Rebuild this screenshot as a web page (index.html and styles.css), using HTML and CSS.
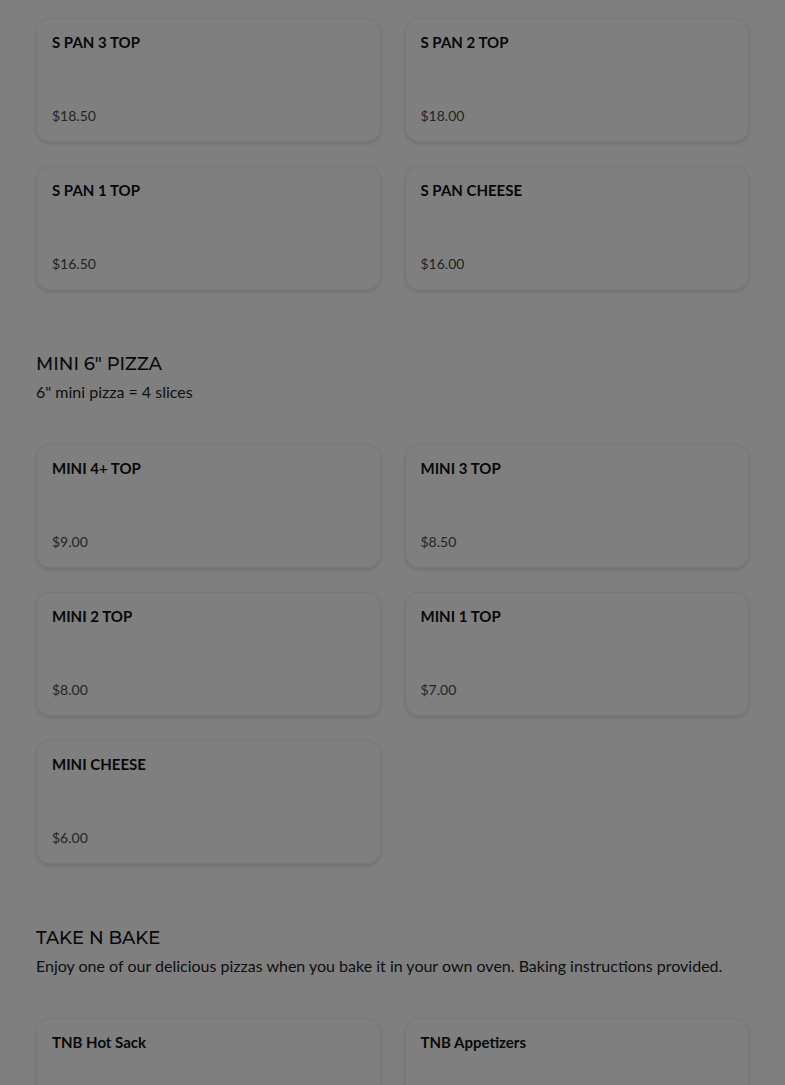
FILE: index.html
```html
<!DOCTYPE html>
<html>
<head>
<meta charset="utf-8">
<link rel="stylesheet" href="styles.css">
</head>
<body>
<main class="menu">
  <section class="section first">
    <div class="grid">
      <div class="card"><div class="name">S PAN 3 TOP</div><div class="price">$18.50</div></div>
      <div class="card"><div class="name">S PAN 2 TOP</div><div class="price">$18.00</div></div>
      <div class="card"><div class="name">S PAN 1 TOP</div><div class="price">$16.50</div></div>
      <div class="card"><div class="name">S PAN CHEESE</div><div class="price">$16.00</div></div>
    </div>
  </section>
  <section class="section">
    <h2 class="heading">MINI 6" PIZZA</h2>
    <p class="desc">6" mini pizza = 4 slices</p>
    <div class="grid">
      <div class="card"><div class="name">MINI 4+ TOP</div><div class="price">$9.00</div></div>
      <div class="card"><div class="name">MINI 3 TOP</div><div class="price">$8.50</div></div>
      <div class="card"><div class="name">MINI 2 TOP</div><div class="price">$8.00</div></div>
      <div class="card"><div class="name">MINI 1 TOP</div><div class="price">$7.00</div></div>
      <div class="card"><div class="name">MINI CHEESE</div><div class="price">$6.00</div></div>
    </div>
  </section>
  <section class="section">
    <h2 class="heading">TAKE N BAKE</h2>
    <p class="desc">Enjoy one of our delicious pizzas when you bake it in your own oven. Baking instructions provided.</p>
    <div class="grid">
      <div class="card"><div class="name">TNB Hot Sack</div><div class="price"></div></div>
      <div class="card"><div class="name">TNB Appetizers</div><div class="price"></div></div>
    </div>
  </section>
</main>
<div class="overlay"></div>
</body>
</html>
```
FILE: styles.css
```css
html, body {
  margin: 0;
  padding: 0;
  background: #ffffff;
  font-family: Lato, "Open Sans", sans-serif;
  color: #1f1f1f;
}
.menu {
  padding: 18px 36px 0 36px;
}
.section {
  margin-bottom: 50px;
}
.heading {
  margin: 0;
  font-family: "Montserrat", Inter, "Open Sans", sans-serif;
  font-weight: 500;
  font-size: 18px;
  line-height: 24px;
  color: #111;
  padding-top: 12px;
}
.desc {
  margin: 6px 0 42px 0;
  font-size: 16px;
  line-height: 20px;
  color: #1d1d1d;
}
.grid {
  display: grid;
  grid-template-columns: 1fr 1fr;
  column-gap: 24px;
  row-gap: 24px;
}
.card {
  height: 124px;
  box-sizing: border-box;
  background: #fff;
  border-radius: 14px;
  border: 1px solid #f2f2f2;
  box-shadow: 0 2px 4px rgba(0,0,0,0.12);
  padding: 14px 15px 17px 15px;
  display: flex;
  flex-direction: column;
  justify-content: space-between;
}
.name {
  font-weight: 700;
  font-size: 15px;
  line-height: 18px;
  color: #111;
}
.price {
  font-size: 14px;
  line-height: 16px;
  color: #4a4a4a;
}
.overlay {
  position: fixed;
  inset: 0;
  background: rgba(0,0,0,0.5);
}
```
